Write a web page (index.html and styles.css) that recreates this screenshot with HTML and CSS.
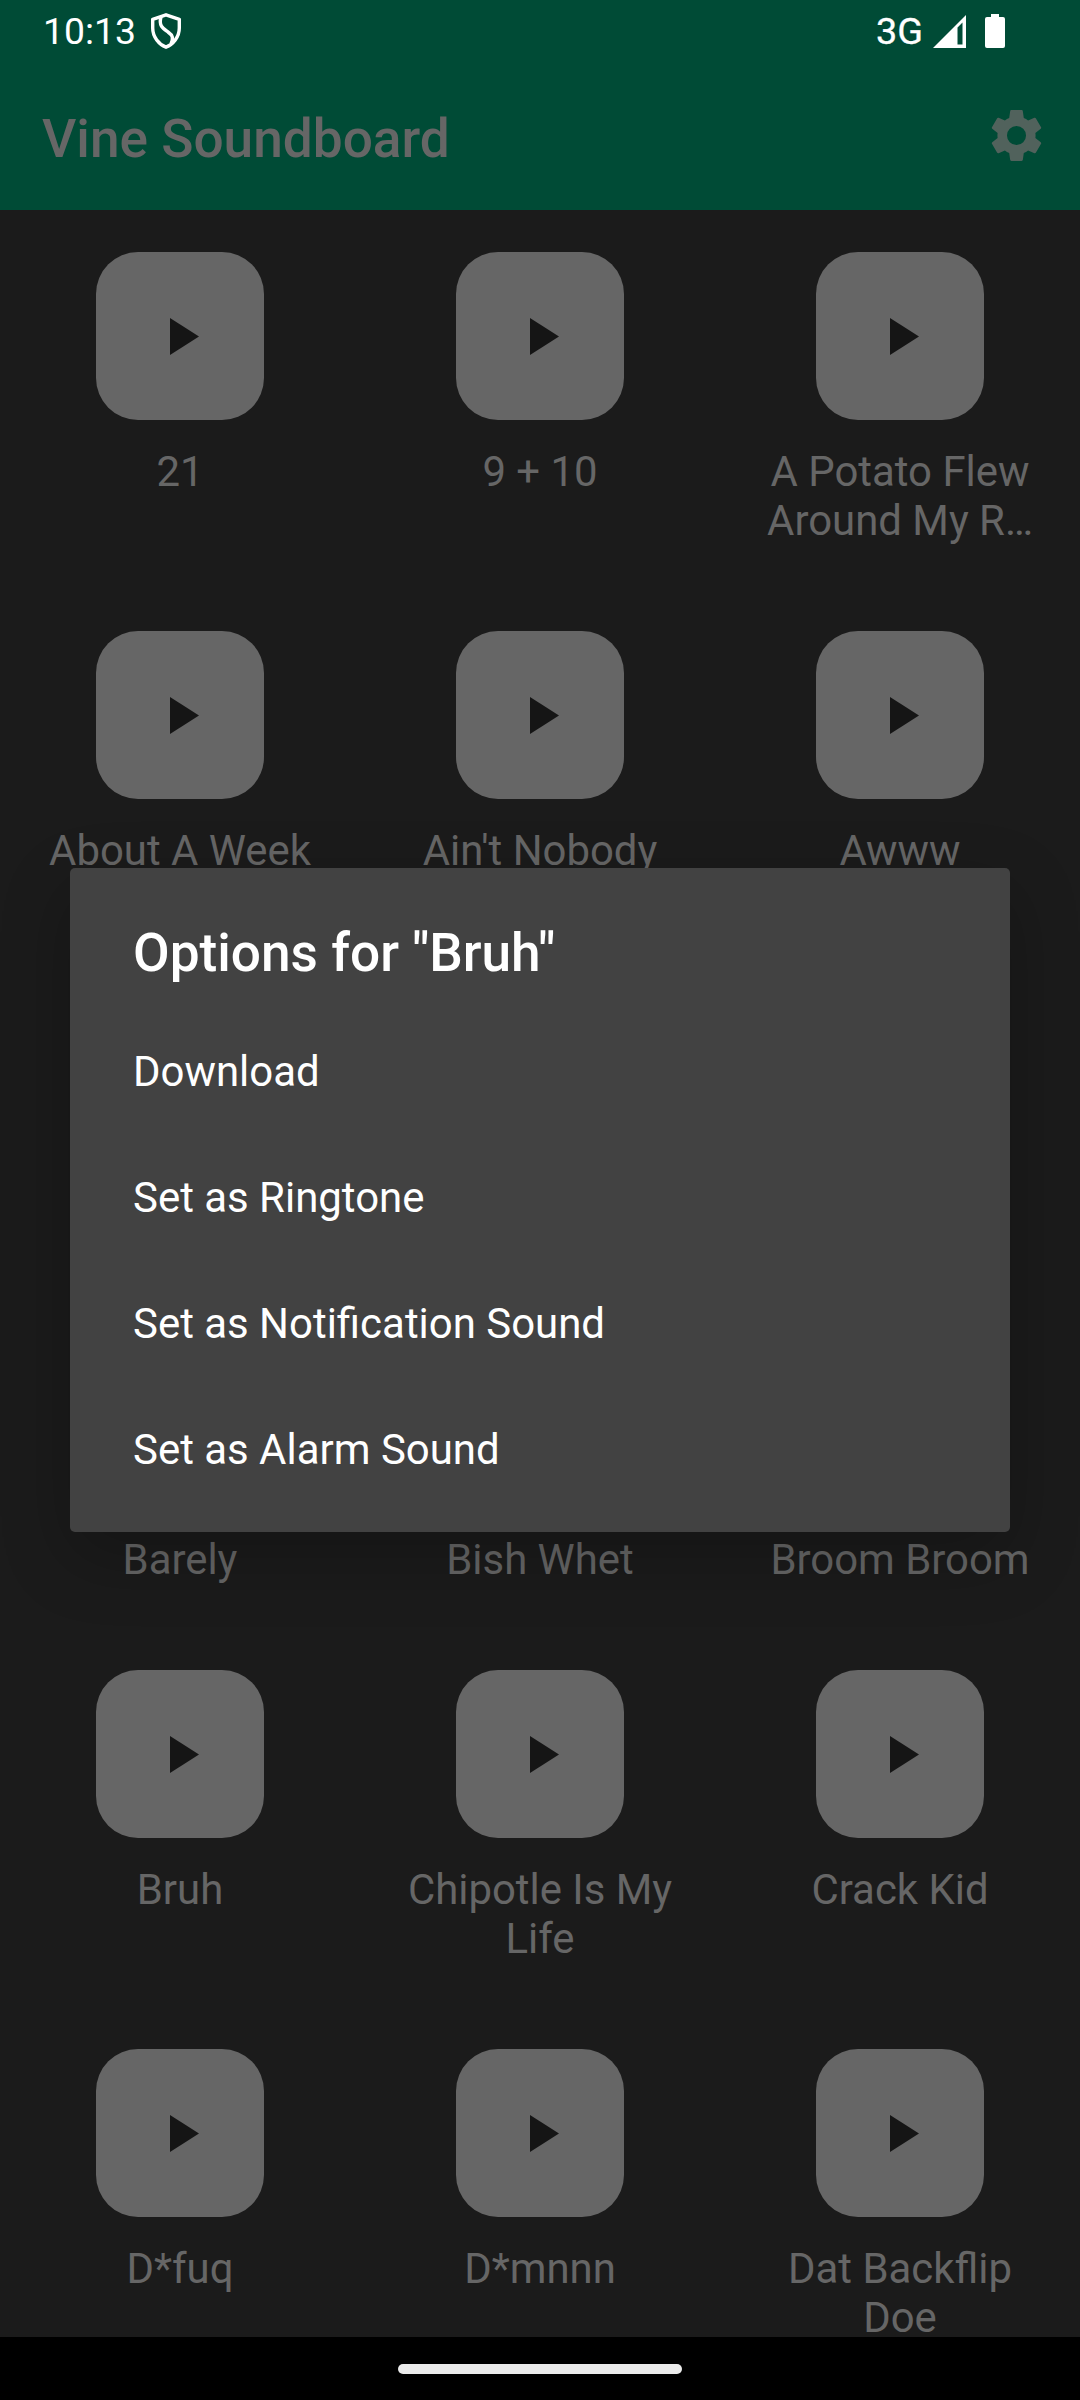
FILE: index.html
```html
<!DOCTYPE html>
<html lang="en">
<head>
<meta charset="utf-8">
<title>Vine Soundboard</title>
<link rel="stylesheet" href="styles.css">
</head>
<body>
<svg class="defs" width="0" height="0"><symbol id="play" viewBox="0 0 29 37"><path d="M0 0V37L29 18.5Z"/></symbol></svg>
<div class="screen">
  <header class="top">
    <div class="status">
      <span class="time">10:13</span>
      <svg class="shield" viewBox="0 0 30 36" fill="none" stroke="#fff" stroke-width="3.4" stroke-linejoin="round"><path d="M15 1.8 28.3 6.300V15C28.300 24 22 31.500 15 34.200 8 31.500 1.700 24 1.700 15V6.300Z"/><path d="M10 4C7.500 13 12 15.500 17 19 22 22.500 22.500 25 20 31"/></svg>
      <span class="net">3G</span>
      <svg class="signal" viewBox="0 0 33 33"><path fill="#fff" fill-rule="evenodd" d="M0 33 33 0V33ZM24.500 12.500V29.500H29.500V7.500Z"/></svg>
      <svg class="battery" viewBox="0 0 20 34"><path fill="#fff" d="M6 0h8v3h4a2 2 0 0 1 2 2v27a2 2 0 0 1-2 2H2a2 2 0 0 1-2-2V5a2 2 0 0 1 2-2h4Z"/></svg>
    </div>
    <div class="appbar">
      <h1>Vine Soundboard</h1>
      <svg class="gear" viewBox="0 0 24 24"><path d="M19.430 12.980c.04-.32.070-.64.070-.98s-.03-.66-.07-.98l2.110-1.650c.19-.15.240-.42.120-.64l-2-3.460c-.12-.22-.39-.3-.61-.22l-2.490 1c-.52-.4-1.080-.73-1.690-.98l-.38-2.650C14.460 2.180 14.250 2 14 2h-4c-.25 0-.46.18-.49.42l-.38 2.650c-.61.25-1.170.59-1.690.98l-2.490-1c-.23-.09-.49 0-.61.22l-2 3.460c-.13.22-.07.49.12.64l2.110 1.650c-.04.32-.07.65-.07.98s.03.66.07.98l-2.110 1.650c-.19.15-.24.42-.12.64l2 3.460c.12.22.39.3.61.22l2.490-1c.52.4 1.080.73 1.690.98l.38 2.650c.03.24.24.42.49.42h4c.25 0 .46-.18.49-.42l.38-2.650c.61-.25 1.170-.59 1.690-.98l2.490 1c.23.09.49 0 .61-.22l2-3.460c.12-.22.070-.49-.12-.64l-2.110-1.650zM12 15.750A3.750 3.750 0 1 1 12 8.250a3.750 3.750 0 0 1 0 7.500z"/></svg>
    </div>
  </header>
  <main class="grid">
    <div class="cell"><div class="tile"><svg><use href="#play"/></svg></div><p>21</p></div>
    <div class="cell"><div class="tile"><svg><use href="#play"/></svg></div><p>9 + 10</p></div>
    <div class="cell"><div class="tile"><svg><use href="#play"/></svg></div><p>A Potato Flew<br>Around My R…</p></div>
    <div class="cell"><div class="tile"><svg><use href="#play"/></svg></div><p>About A Week</p></div>
    <div class="cell"><div class="tile"><svg><use href="#play"/></svg></div><p>Ain't Nobody</p></div>
    <div class="cell"><div class="tile"><svg><use href="#play"/></svg></div><p>Awww</p></div>
    <div class="cell"></div>
    <div class="cell"></div>
    <div class="cell"></div>
    <div class="cell"><div class="tile"><svg><use href="#play"/></svg></div><p>Barely</p></div>
    <div class="cell"><div class="tile"><svg><use href="#play"/></svg></div><p>Bish Whet</p></div>
    <div class="cell"><div class="tile"><svg><use href="#play"/></svg></div><p>Broom Broom</p></div>
    <div class="cell"><div class="tile"><svg><use href="#play"/></svg></div><p>Bruh</p></div>
    <div class="cell"><div class="tile"><svg><use href="#play"/></svg></div><p>Chipotle Is My<br>Life</p></div>
    <div class="cell"><div class="tile"><svg><use href="#play"/></svg></div><p>Crack Kid</p></div>
    <div class="cell"><div class="tile"><svg><use href="#play"/></svg></div><p>D*fuq</p></div>
    <div class="cell"><div class="tile"><svg><use href="#play"/></svg></div><p>D*mnnn</p></div>
    <div class="cell"><div class="tile"><svg><use href="#play"/></svg></div><p>Dat Backflip<br>Doe</p></div>
  </main>
  <footer class="nav"><div class="handle"></div></footer>
  <div class="dialog" role="dialog">
    <h2>Options for "Bruh"</h2>
    <ul>
      <li>Download</li>
      <li>Set as Ringtone</li>
      <li>Set as Notification Sound</li>
      <li>Set as Alarm Sound</li>
    </ul>
  </div>
</div>
</body>
</html>
```
FILE: styles.css
```css
* { box-sizing: border-box; margin: 0; padding: 0; }
body { font-family: Roboto, sans-serif; background: #1b1b1b; }
.defs { position: absolute; }
.screen { position: relative; display: flex; flex-direction: column; width: 1080px; height: 2400px; overflow: hidden; }
.top { flex: none; height: 210px; background: #004b36; }
.status { display: flex; align-items: center; height: 62px; padding: 0 75px 0 43px; color: #fff; font-size: 37.300px; line-height: 44px; }
.shield { width: 30px; height: 36px; margin-left: 15px; }
.net { margin-left: auto; font-size: 37.800px; font-weight: 400; -webkit-text-stroke: .3px #fff; }
.signal { width: 33px; height: 33px; margin-left: 10px; }
.battery { width: 20px; height: 34px; margin-left: 19px; }
.appbar { display: flex; align-items: center; justify-content: space-between; height: 147px; padding: 0 33px 0 42px; }
.appbar h1 { padding-top: 6px; font-size: 53.200px; font-weight: 500; line-height: 62px; color: #666; }
.gear { width: 61px; height: 61px; fill: #51625c; }
.grid { flex: none; height: 2127px; padding-top: 42px; display: grid; grid-template-columns: repeat(3, 360px); grid-template-rows: 379px 379px 330px 330px 379px 379px; }
.cell { display: flex; flex-direction: column; align-items: center; }
.tile { display: flex; flex: none; align-items: center; width: 168px; height: 168px; padding-left: 74px; border-radius: 42px; background: #666; }
.tile svg { width: 29px; height: 37px; fill: #151515; }
.cell p { margin-top: 27px; color: #666; font-size: 41.900px; line-height: 49px; text-align: center; white-space: nowrap; }
.nav { flex: 1; display: flex; align-items: center; justify-content: center; padding-top: 1px; background: #000; }
.handle { width: 284px; height: 10px; border-radius: 5px; background: #ebebeb; }
.dialog { position: absolute; left: 70px; top: 868px; width: 940px; height: 664px; padding: 54px 63px 0; border-radius: 5px; background: #424242; color: #fff; box-shadow: 0 24px 70px rgba(0, 0, 0, .24); }
.dialog h2 { font-size: 53.200px; font-weight: 500; line-height: 62px; }
.dialog ul { margin-top: 25px; list-style: none; }
.dialog li { height: 126px; font-size: 41.950px; line-height: 126px; }
```
